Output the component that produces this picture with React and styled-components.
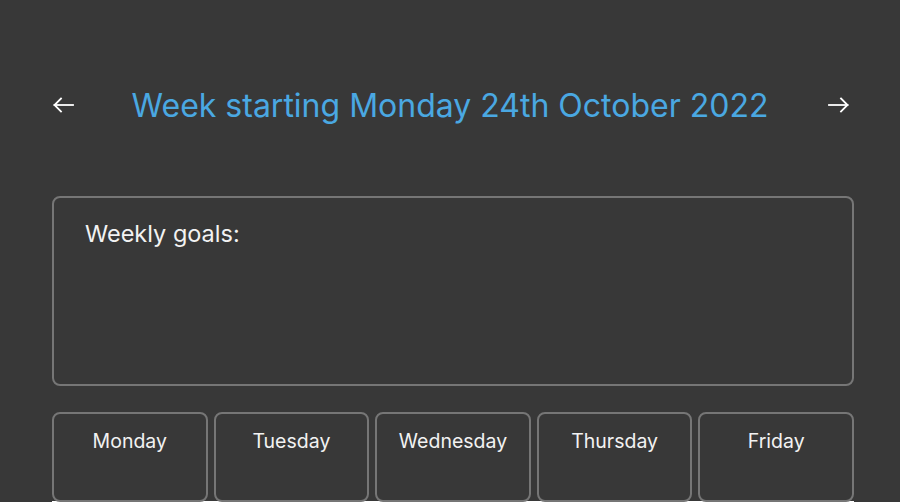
import React from "react";
import styled, { createGlobalStyle } from "styled-components";

const Global = createGlobalStyle`
  html, body { margin: 0; padding: 0; background: #383838; }
  body { font-family: Inter, "Noto Sans", sans-serif; }
`;

const Page = styled.div`
  min-height: 502px;
  background: #383838;
  padding: 75px 46px 0 52px;
  box-sizing: border-box;
  width: 900px;
  overflow: hidden;
`;

const Header = styled.header`
  display: flex;
  align-items: center;
  justify-content: space-between;
  height: 60px;
  padding: 0 5px 0 1px;
`;

const ArrowButton = styled.button`
  background: none;
  border: none;
  padding: 0;
  margin: 0;
  width: 21px;
  height: 22px;
  display: flex;
  align-items: center;
  justify-content: center;
  color: #ffffff;
  cursor: pointer;
`;

const Title = styled.h1`
  margin: 0 2px 0 0;
  font-family: Inter, sans-serif;
  font-weight: 400;
  font-size: 32px;
  color: #4aa8e2;
  letter-spacing: 0;
`;

const GoalsBox = styled.section`
  margin-top: 61px;
  height: 190px;
  box-sizing: border-box;
  border: 2px solid #767676;
  border-radius: 8px;
  padding: 20px 31px;
`;

const GoalsLabel = styled.div`
  font-size: 23.5px;
  color: #f2f2f2;
  line-height: 32px;
`;

const DayRow = styled.div`
  margin-top: 26px;
  display: grid;
  grid-template-columns: repeat(5, 1fr);
  column-gap: 6px;
  border-bottom: 1px solid #ffffff;
`;

const DayCard = styled.div`
  height: 90px;
  margin-bottom: -1px;
  box-sizing: border-box;
  border: 2px solid #767676;
  border-radius: 8px;
  background: #383838;
  padding-top: 15px;
  text-align: center;
  font-size: 19.5px;
  color: #f2f2f2;
  line-height: 24px;
`;

const Arrow = ({ dir }) => (
  <svg width="21" height="22" viewBox="0 0 21 22" fill="none" stroke="currentColor" strokeWidth="1.8" strokeLinecap="square">
    {dir === "left" ? (
      <>
        <line x1="1.5" y1="11" x2="20" y2="11" />
        <polyline points="8,4.5 1.5,11 8,17.5" strokeLinejoin="miter" />
      </>
    ) : (
      <>
        <line x1="1" y1="11" x2="19.5" y2="11" />
        <polyline points="13,4.5 19.5,11 13,17.5" strokeLinejoin="miter" />
      </>
    )}
  </svg>
);

const days = ["Monday", "Tuesday", "Wednesday", "Thursday", "Friday"];

export default function App() {
  return (
    <>
      <Global />
      <Page>
        <Header>
          <ArrowButton aria-label="Previous week"><Arrow dir="left" /></ArrowButton>
          <Title>Week starting Monday 24th October 2022</Title>
          <ArrowButton aria-label="Next week"><Arrow dir="right" /></ArrowButton>
        </Header>
        <GoalsBox>
          <GoalsLabel>Weekly goals:</GoalsLabel>
        </GoalsBox>
        <DayRow>
          {days.map((d) => (
            <DayCard key={d}>{d}</DayCard>
          ))}
        </DayRow>
      </Page>
    </>
  );
}
